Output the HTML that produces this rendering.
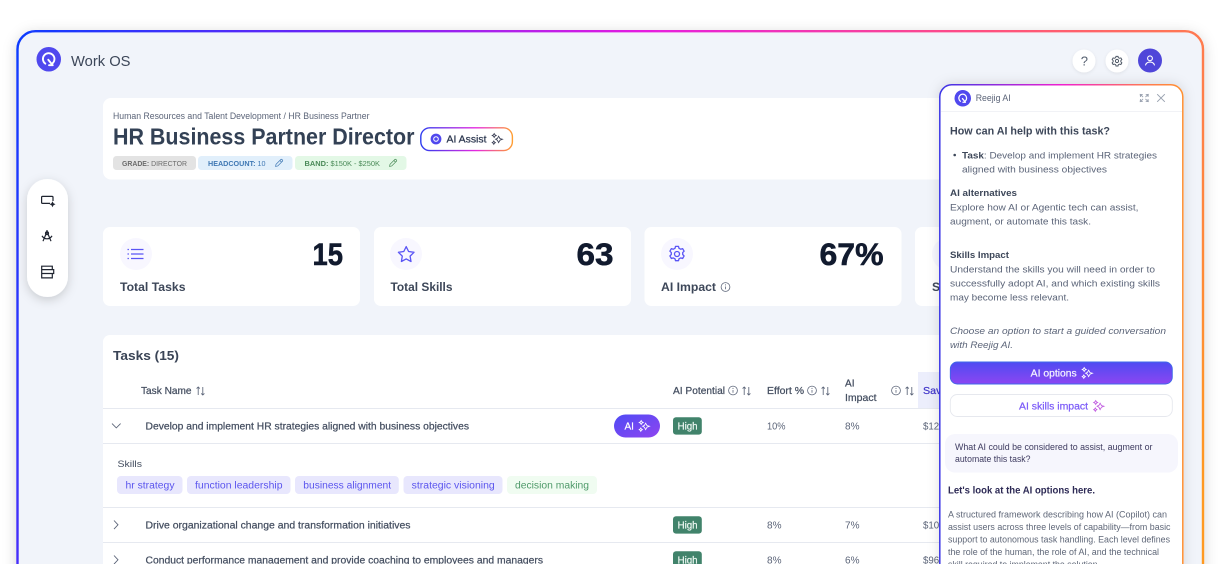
<!DOCTYPE html>
<html lang="en"><head><meta charset="utf-8"><title>Work OS</title>
<style>
html,body{margin:0;padding:0;background:#fff;width:1230px;height:564px;overflow:hidden}
svg{display:block}
text{font-family:"Liberation Sans",sans-serif;white-space:pre}
.b{font-weight:700}
</style></head><body>
<svg width="1230" height="564" viewBox="0 0 1230 564" xmlns="http://www.w3.org/2000/svg">
<defs>
<linearGradient id="fr" gradientUnits="userSpaceOnUse" x1="17" y1="0" x2="1230" y2="420"><stop offset="0" stop-color="#0a3cff"/><stop offset=".27" stop-color="#7a22f5"/><stop offset=".47" stop-color="#e61ee0"/><stop offset=".72" stop-color="#ff4f80"/><stop offset=".88" stop-color="#ff7a50"/><stop offset="1" stop-color="#ff9a20"/></linearGradient>
<linearGradient id="pn" gradientUnits="userSpaceOnUse" x1="939" y1="0" x2="1183" y2="0"><stop offset="0" stop-color="#3a36e6"/><stop offset=".5" stop-color="#f01fd0"/><stop offset=".85" stop-color="#ff7a50"/><stop offset="1" stop-color="#ff9030"/></linearGradient>
<linearGradient id="as" gradientUnits="userSpaceOnUse" x1="420" y1="0" x2="513" y2="0"><stop offset="0" stop-color="#2a3cf0"/><stop offset=".6" stop-color="#e628e0"/><stop offset="1" stop-color="#ffa030"/></linearGradient>
<linearGradient id="pb" x1="0" y1="0" x2="0" y2="1"><stop offset="0" stop-color="#4f4bf2"/><stop offset="1" stop-color="#8c46f2"/></linearGradient>
<linearGradient id="pa" x1="0" y1="0" x2="1" y2="1"><stop offset="0" stop-color="#4f4bf5"/><stop offset="1" stop-color="#8f45f0"/></linearGradient>
<filter id="s1" x="-5%" y="-10%" width="110%" height="120%"><feDropShadow dx="0" dy="3" stdDeviation="7" flood-color="#000" flood-opacity=".16"/></filter>
<filter id="s2" x="-60%" y="-30%" width="220%" height="160%"><feDropShadow dx="0" dy="3" stdDeviation="5" flood-color="#000" flood-opacity=".17"/></filter>
<filter id="s3" x="-12%" y="-5%" width="124%" height="110%"><feDropShadow dx="0" dy="0" stdDeviation="6" flood-color="#000" flood-opacity=".13"/></filter>
<filter id="s4" x="-30%" y="-30%" width="160%" height="160%"><feDropShadow dx="0" dy="1" stdDeviation="1.5" flood-color="#000" flood-opacity=".08"/></filter>
<symbol id="spark" viewBox="0 0 12 12" overflow="visible"><g fill="none" stroke="currentColor" stroke-width=".85"><path d="M7.6 3.2 9 5.6 11.4 6.2 9 7.2 7.6 9.6 6.4 7.2 4.6 6.2 6.4 5.4Z"/><path d="M3.2.6 4 1.9 5.2 2.5 4 3.1 3.2 4.4 2.4 3.1 1.2 2.5 2.4 1.9Z"/><path d="M2.8 8 3.4 9 4.4 9.6 3.4 10.2 2.8 11.3 2.2 10.2 1.2 9.6 2.2 9Z"/></g></symbol>
<symbol id="info" viewBox="0 0 10 10" overflow="visible"><g fill="none" stroke="currentColor" stroke-width=".8"><circle cx="5" cy="5" r="4.4"/><path d="M5 4.5V7.3"/></g><circle cx="5" cy="2.9" r=".55" fill="currentColor"/></symbol>
<symbol id="sort" viewBox="0 0 9 10" overflow="visible"><path d="M2.2 9V1M.6 2.6 2.2 1 3.8 2.6M6.8 1V9M5.2 7.4 6.8 9 8.4 7.4" fill="none" stroke="currentColor" stroke-width=".85"/></symbol>
<symbol id="pen" viewBox="0 0 10 10" overflow="visible"><path d="M1.2 8.8 1.7 6.4 6.9 1.2a1 1 0 0 1 1.5 0l.4.4a1 1 0 0 1 0 1.5L3.6 8.3ZM6 2.2 7.8 4" fill="none" stroke="currentColor" stroke-width=".8"/></symbol>
<symbol id="logo" viewBox="0 0 25 25" overflow="visible"><circle cx="12.5" cy="12.5" r="12.5" fill="#5048ee"/><path d="M9 17A5.9 5.9 0 1 1 16.6 16.4" fill="none" stroke="#fff" stroke-width="1.9" stroke-linecap="round"/><path d="M12 13 16.6 18.6H12.8" fill="none" stroke="#fff" stroke-width="1.9" stroke-linecap="round" stroke-linejoin="round"/></symbol>
</defs>

<rect x="17.5" y="31.2" width="1185.5" height="600" rx="18" fill="#f1f4fa" stroke="url(#fr)" stroke-width="2.4" filter="url(#s1)"/>

<use href="#logo" x="36.5" y="47" width="24.5" height="24.5"/>
<text x="71" y="66" font-size="14.5" fill="#3d4759" textLength="59.5" lengthAdjust="spacingAndGlyphs">Work OS</text>

<circle cx="1084" cy="61" r="11.5" fill="#fff" filter="url(#s4)"/>
<text x="1080.8" y="65.7" font-size="13" fill="#556070">?</text>
<circle cx="1117" cy="61" r="11.5" fill="#fff" filter="url(#s4)"/>
<g fill="none" stroke="#4b5563" stroke-width=".95"><circle cx="1117" cy="61" r="1.6"/><path d="M1116 56.4h2l.35 1.3 1.2.6 1.3-.4 1 1.7-1 .95v1.3l1 .95-1 1.7-1.3-.4-1.2.6-.35 1.3h-2l-.35-1.3-1.2-.6-1.3.4-1-1.7 1-.95v-1.3l-1-.95 1-1.7 1.3.4 1.2-.6z"/></g>
<circle cx="1150" cy="60.5" r="12" fill="#4f46d9"/>
<g fill="none" stroke="#fff" stroke-width="1.1" stroke-linecap="round"><circle cx="1150" cy="58.3" r="2.4"/><path d="M1145.6 65c.6-2 2.3-2.9 4.4-2.9s3.8.9 4.4 2.9"/></g>

<!-- header card -->
<rect x="103" y="98" width="850" height="81.5" rx="8" fill="#fff"/>
<text x="113" y="119" font-size="9" fill="#5b6478" textLength="256.5" lengthAdjust="spacingAndGlyphs">Human Resources and Talent Development / HR Business Partner</text>
<text x="113" y="144.7" font-size="23" class="b" fill="#334155" textLength="301.5" lengthAdjust="spacingAndGlyphs">HR Business Partner Director</text>
<rect x="420.8" y="127.8" width="91.6" height="22.8" rx="9" fill="#fff" stroke="url(#as)" stroke-width="1.4"/>
<circle cx="436" cy="139" r="5.4" fill="#5048ee"/><circle cx="436" cy="139" r="2.3" fill="none" stroke="#fff" stroke-width="1"/>
<text x="446.5" y="142.7" font-size="10" fill="#2f3a52" stroke="#2f3a52" stroke-width=".25" textLength="40" lengthAdjust="spacingAndGlyphs">AI Assist</text>
<use href="#spark" x="491" y="133" width="12" height="12" color="#3a3f55"/>

<rect x="113" y="156" width="83" height="14" rx="3.5" fill="#e3e3e3"/>
<text x="122" y="166" font-size="7.2" fill="#6b6b6b" textLength="65" lengthAdjust="spacingAndGlyphs"><tspan class="b">GRADE:</tspan> DIRECTOR</text>
<rect x="198" y="156" width="94.5" height="14" rx="3.5" fill="#e1effb"/>
<text x="208" y="166" font-size="7.2" fill="#3f78b4" textLength="57.5" lengthAdjust="spacingAndGlyphs"><tspan class="b">HEADCOUNT:</tspan> 10</text>
<use href="#pen" x="274.5" y="158.5" width="9" height="9" color="#3f78b4"/>
<rect x="295" y="156" width="111.5" height="14" rx="3.5" fill="#e3f8e6"/>
<text x="304.5" y="166" font-size="7.2" fill="#4a8a58" textLength="75.5" lengthAdjust="spacingAndGlyphs"><tspan class="b">BAND:</tspan> $150K - $250K</text>
<use href="#pen" x="388.5" y="158.5" width="9" height="9" color="#4a8a58"/>

<!-- side pill -->
<rect x="27" y="179" width="41" height="118" rx="20.5" fill="#fff" filter="url(#s2)"/>
<g fill="none" stroke="#1f2430" stroke-width="1.2">
<path d="M53 201v-3.6a1 1 0 0 0-1-1h-9.4a1 1 0 0 0-1 1v5a1 1 0 0 0 1 1H50"/>
<path d="M47 230v1.6M47 231.6l-4 9.6M47 231.6l4 9.6M42 235.8c1.2 2.2 3 3 5 3s3.8-.8 5-3"/><circle cx="47" cy="233.2" r="1.5"/>
<path d="M41.7 266.2h10.6v3.4H41.7zM41.7 269.6h12v3.9h-12zM41.7 273.5h10.6v4.4H41.7z"/>
</g>
<path d="M52.5 201.2l1 2.1 2 1-2 1-1 2-1-2-2-1 2-1z" fill="#1f2430"/>

<!-- stat cards -->
<rect x="103" y="227" width="257" height="79" rx="7" fill="#fff"/>
<rect x="374" y="227" width="257" height="79" rx="7" fill="#fff"/>
<rect x="644.5" y="227" width="257" height="79" rx="7" fill="#fff"/>
<rect x="915" y="227" width="100" height="79" rx="7" fill="#fff"/>
<circle cx="136" cy="254" r="16" fill="#f8f7ff"/><circle cx="406" cy="254" r="16" fill="#f8f7ff"/><circle cx="677" cy="254" r="16" fill="#f8f7ff"/><circle cx="948" cy="254" r="16" fill="#f8f7ff"/>
<g fill="none" stroke="#5a55f5" stroke-width="1.3">
<path d="M131 249.5h12.5M131 254h12.5M131 258.5h12.5M127.5 249.5h1.4M127.5 254h1.4M127.5 258.5h1.4"/>
<path d="M406.2 246.6l2.4 4.9 5.4.8-3.9 3.8.9 5.4-4.8-2.6-4.8 2.6.9-5.4-3.9-3.8 5.4-.8z" stroke-linejoin="round"/>
<circle cx="677" cy="254" r="2.5"/>
<path d="M675.5 246.4h3l.5 1.9 1.7.9 1.9-.6 1.5 2.6-1.4 1.4v1.9l1.4 1.4-1.5 2.6-1.9-.6-1.7.9-.5 1.9h-3l-.5-1.9-1.7-.9-1.9.6-1.5-2.6 1.4-1.4v-1.9l-1.4-1.4 1.5-2.6 1.9.6 1.7-.9z" stroke-linejoin="round"/>
</g>
<g font-size="31.5" fill="#111a2e" stroke="#111a2e" stroke-width=".55">
<text x="312.5" y="265" class="b" textLength="30.5" lengthAdjust="spacingAndGlyphs">15</text>
<text x="576.5" y="265" class="b" textLength="37" lengthAdjust="spacingAndGlyphs">63</text>
<text x="819.5" y="265" class="b" textLength="64" lengthAdjust="spacingAndGlyphs">67%</text>
</g>
<g font-size="12" fill="#3d4759">
<text x="120" y="291" class="b" textLength="65.5" lengthAdjust="spacingAndGlyphs">Total Tasks</text>
<text x="390.5" y="291" class="b" textLength="62" lengthAdjust="spacingAndGlyphs">Total Skills</text>
<text x="661" y="291" class="b" textLength="55" lengthAdjust="spacingAndGlyphs">AI Impact</text>
<text x="932" y="291" class="b">S</text>
</g>
<use href="#info" x="720.5" y="282" width="10" height="10" color="#5b6478"/>

<!-- table -->
<rect x="103" y="335" width="880" height="260" rx="7" fill="#fff"/>
<text x="113" y="360" font-size="13" class="b" fill="#3a4456" textLength="66" lengthAdjust="spacingAndGlyphs">Tasks (15)</text>
<rect x="918" y="372" width="60" height="36" fill="#eceefc"/>
<g fill="none" stroke="#e6e9f0" stroke-width="1">
<path d="M103 408.5H980M103 443.5H980M103 507.5H980M103 542.5H980"/>
</g>
<g font-size="9.7" fill="#444e60" stroke="#444e60" stroke-width=".22">
<text x="141" y="393.8" textLength="50.5" lengthAdjust="spacingAndGlyphs">Task Name</text>
<text x="673" y="393.8" textLength="52" lengthAdjust="spacingAndGlyphs">AI Potential</text>
<text x="767" y="393.8" textLength="37" lengthAdjust="spacingAndGlyphs">Effort %</text>
<text x="845" y="386.6" textLength="9.5" lengthAdjust="spacingAndGlyphs">AI</text>
<text x="845" y="401" textLength="31.5" lengthAdjust="spacingAndGlyphs">Impact</text>
</g>
<text x="923" y="393.8" font-size="9.7" fill="#4338ca" stroke="#4338ca" stroke-width=".22" textLength="38" lengthAdjust="spacingAndGlyphs">Savings</text>
<g color="#5b6478">
<use href="#sort" x="196" y="386" width="9" height="10"/>
<use href="#info" x="728" y="385.5" width="10" height="10"/><use href="#sort" x="742" y="386" width="9" height="10"/>
<use href="#info" x="807" y="385.5" width="10" height="10"/><use href="#sort" x="821" y="386" width="9" height="10"/>
<use href="#info" x="891" y="385.5" width="10" height="10"/><use href="#sort" x="905" y="386" width="9" height="10"/>
</g>
<g fill="none" stroke="#5b6478" stroke-width=".9">
<path d="M112 423.6l4.3 4.3 4.3-4.3M114 520.5l4 4.3-4 4.3M114 555.5l4 4.3-4 4.3"/>
</g>
<g font-size="9.8" fill="#444e60" stroke="#444e60" stroke-width=".22">
<text x="145.5" y="429.3" textLength="323.5" lengthAdjust="spacingAndGlyphs">Develop and implement HR strategies aligned with business objectives</text>
<text x="145.5" y="528.3" textLength="265" lengthAdjust="spacingAndGlyphs">Drive organizational change and transformation initiatives</text>
<text x="145.5" y="563.3" textLength="397.5" lengthAdjust="spacingAndGlyphs">Conduct performance management and provide coaching to employees and managers</text>
</g>
<rect x="614" y="414.5" width="46" height="23" rx="11.5" fill="url(#pa)"/>
<text x="624.5" y="429.3" font-size="10" fill="#fff" stroke="#fff" stroke-width=".2">AI</text>
<use href="#spark" x="638" y="420" width="12" height="12" color="#fff"/>
<g fill="#41836b"><rect x="673" y="417.3" width="28.8" height="17.3" rx="3"/><rect x="673" y="516.3" width="28.8" height="17.3" rx="3"/><rect x="673" y="551.3" width="28.8" height="17.3" rx="3"/></g>
<g font-size="9.7" fill="#eef8f3" stroke="#eef8f3" stroke-width=".2">
<text x="677.6" y="429.3" textLength="20" lengthAdjust="spacingAndGlyphs">High</text>
<text x="677.6" y="528.3" textLength="20" lengthAdjust="spacingAndGlyphs">High</text>
<text x="677.6" y="563.3" textLength="20" lengthAdjust="spacingAndGlyphs">High</text>
</g>
<g font-size="9.7" fill="#5b6478">
<text x="767" y="429.4" textLength="18.5" lengthAdjust="spacingAndGlyphs">10%</text><text x="845" y="429.4" textLength="14.5" lengthAdjust="spacingAndGlyphs">8%</text><text x="923" y="429.4">$12</text>
<text x="767" y="528.4" textLength="14.5" lengthAdjust="spacingAndGlyphs">8%</text><text x="845" y="528.4" textLength="14.5" lengthAdjust="spacingAndGlyphs">7%</text><text x="923" y="528.4">$10</text>
<text x="767" y="563.4" textLength="14.5" lengthAdjust="spacingAndGlyphs">8%</text><text x="845" y="563.4" textLength="14.5" lengthAdjust="spacingAndGlyphs">6%</text><text x="923" y="563.4">$96</text>
</g>
<text x="117.5" y="467.2" font-size="9.5" fill="#444e60" textLength="24.5" lengthAdjust="spacingAndGlyphs">Skills</text>
<g fill="#e8e7fd"><rect x="117" y="476" width="65.5" height="18" rx="4"/><rect x="187" y="476" width="103.5" height="18" rx="4"/><rect x="295" y="476" width="103.8" height="18" rx="4"/><rect x="403.5" y="476" width="99" height="18" rx="4"/></g>
<rect x="507" y="476" width="90" height="18" rx="4" fill="#f0fcf1"/>
<g font-size="9.7" fill="#5b55ee">
<text x="125.5" y="488.3" textLength="49" lengthAdjust="spacingAndGlyphs">hr strategy</text>
<text x="195" y="488.3" textLength="87.5" lengthAdjust="spacingAndGlyphs">function leadership</text>
<text x="303.3" y="488.3" textLength="87.8" lengthAdjust="spacingAndGlyphs">business alignment</text>
<text x="411.7" y="488.3" textLength="83" lengthAdjust="spacingAndGlyphs">strategic visioning</text>
<text x="515" y="488.3" textLength="74" lengthAdjust="spacingAndGlyphs" fill="#4f9a6a">decision making</text>
</g>

<!-- panel -->
<rect x="939.8" y="84.8" width="243" height="520" rx="12" fill="#fff" stroke="url(#pn)" stroke-width="1.5" filter="url(#s3)"/>
<path d="M941 111.5H1182" stroke="#f1f2f6" stroke-width="1"/>
<use href="#logo" x="954.5" y="90" width="16.5" height="16.5"/>
<text x="975.7" y="101" font-size="8.8" fill="#5b6478" textLength="35" lengthAdjust="spacingAndGlyphs">Reejig AI</text>
<g fill="none" stroke="#9aa2b0" stroke-width=".9"><path d="M1140.5 97l-.3-2.6 2.6.3M1140.3 94.5l2.8 2.6M1148 97l.3-2.6-2.6.3M1148.2 94.5l-2.8 2.6M1140.5 99l-.3 2.6 2.6-.3M1140.3 101.5l2.8-2.6M1148 99l.3 2.6-2.6-.3M1148.2 101.5l-2.8-2.6"/><path d="M1157.2 94.2l7.6 7.6M1164.8 94.2l-7.6 7.6" stroke-width="1"/></g>
<text x="950" y="134.6" font-size="11" class="b" fill="#3d4759" textLength="160" lengthAdjust="spacingAndGlyphs">How can AI help with this task?</text>
<circle cx="954.7" cy="155" r="1.3" fill="#3d4759"/>
<g font-size="9.6" fill="#5b6478">
<text x="962" y="158.4" textLength="195" lengthAdjust="spacingAndGlyphs"><tspan class="b" fill="#3d4759">Task</tspan>: Develop and implement HR strategies</text>
<text x="962" y="172.4" textLength="145" lengthAdjust="spacingAndGlyphs">aligned with business objectives</text>
<text x="950" y="196.2" class="b" fill="#3d4759" textLength="67" lengthAdjust="spacingAndGlyphs">AI alternatives</text>
<text x="950" y="210.4" textLength="188.5" lengthAdjust="spacingAndGlyphs">Explore how AI or Agentic tech can assist,</text>
<text x="950" y="224.4" textLength="141" lengthAdjust="spacingAndGlyphs">augment, or automate this task.</text>
<text x="950" y="258.2" class="b" fill="#3d4759" textLength="59" lengthAdjust="spacingAndGlyphs">Skills Impact</text>
<text x="950" y="272.4" textLength="205" lengthAdjust="spacingAndGlyphs">Understand the skills you will need in order to</text>
<text x="950" y="286.4" textLength="210" lengthAdjust="spacingAndGlyphs">successfully adopt AI, and which existing skills</text>
<text x="950" y="300.4" textLength="119" lengthAdjust="spacingAndGlyphs">may become less relevant.</text>
<text x="950" y="334" font-style="italic" textLength="216" lengthAdjust="spacingAndGlyphs">Choose an option to start a guided conversation</text>
<text x="950" y="348" font-style="italic" textLength="63" lengthAdjust="spacingAndGlyphs">with Reejig AI.</text>
</g>
<rect x="950.3" y="362" width="222" height="22" rx="7" fill="url(#pb)" stroke="#3f68e8" stroke-width=".9"/>
<text x="1030.7" y="376.5" font-size="9.7" fill="#f3f1ff" stroke="#f3f1ff" stroke-width=".22" textLength="46" lengthAdjust="spacingAndGlyphs">AI options</text>
<use href="#spark" x="1081" y="367" width="12" height="12" color="#fff"/>
<rect x="950.3" y="394.5" width="222" height="22" rx="7" fill="#fff" stroke="#e6e8ee" stroke-width=".9"/>
<text x="1019" y="409.3" font-size="9.7" fill="#7c5cf8" stroke="#7c5cf8" stroke-width=".22" textLength="69" lengthAdjust="spacingAndGlyphs">AI skills impact</text>
<use href="#spark" x="1092.5" y="400" width="12" height="12" color="#c05ce0"/>
<rect x="945" y="434" width="233" height="38.5" rx="10" fill="#f6f6fd"/>
<g font-size="9" fill="#3e3b60">
<text x="955" y="450" textLength="197.5" lengthAdjust="spacingAndGlyphs">What AI could be considered to assist, augment or</text>
<text x="955" y="462" textLength="75.5" lengthAdjust="spacingAndGlyphs">automate this task?</text>
</g>
<text x="948" y="493.3" font-size="9.8" class="b" fill="#2d2a55" textLength="147" lengthAdjust="spacingAndGlyphs">Let's look at the AI options here.</text>
<g font-size="9" fill="#5f6778">
<text x="948" y="517.6" textLength="219" lengthAdjust="spacingAndGlyphs">A structured framework describing how AI (Copilot) can</text>
<text x="948" y="530" textLength="222.5" lengthAdjust="spacingAndGlyphs">assist users across three levels of capability—from basic</text>
<text x="948" y="542.5" textLength="222" lengthAdjust="spacingAndGlyphs">support to autonomous task handling. Each level defines</text>
<text x="948" y="555" textLength="211" lengthAdjust="spacingAndGlyphs">the role of the human, the role of AI, and the technical</text>
<text x="948" y="567.5" textLength="152" lengthAdjust="spacingAndGlyphs">skill required to implement the solution.</text>
</g>
</svg>
</body></html>
